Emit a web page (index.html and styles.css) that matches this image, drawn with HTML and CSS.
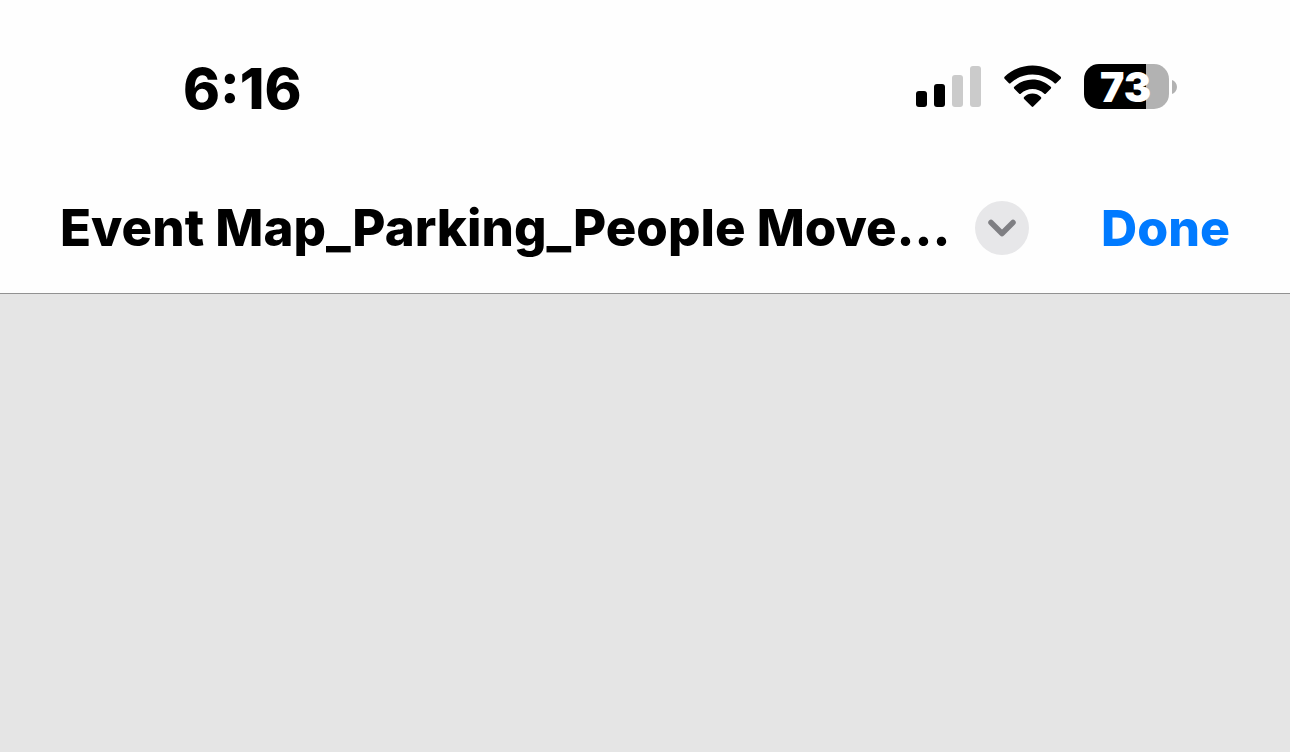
FILE: index.html
```html
<!DOCTYPE html>
<html lang="en">
<head>
<meta charset="utf-8">
<meta name="viewport" content="width=device-width, initial-scale=1">
<title>Event Map</title>
<link rel="stylesheet" href="styles.css">
</head>
<body>
<header class="top">
  <div class="status">
    <time class="clock">6:16</time>
    <div class="indicators">
      <svg class="signal" width="66" height="42" viewBox="0 0 66 42" role="img" aria-label="Signal: 2 of 4 bars">
        <rect x="0" y="25" width="11" height="16" rx="3"/>
        <rect x="18" y="18" width="11" height="23" rx="3"/>
        <rect class="off" x="36" y="9" width="11" height="32" rx="3"/>
        <rect class="off" x="54" y="0" width="11" height="41" rx="3"/>
      </svg>
      <svg class="wifi" width="58" height="42" viewBox="0 0 58 42" role="img" aria-label="Wi-Fi">
        <path d="M.6 10.700C8.300 3.500 18.300-.5 28.500-.5s20.500 4 28.200 11.200q.8 1 0 2L52.300 17.100q-1 1-2 0C44.500 11.500 36.800 8.500 28.500 8.500S12.500 11.500 6.700 17.100q-1 1-2 0L.6 12.700q-.8-1 0-2Z"/>
        <path d="M10.300 20.800C15.300 16.100 21.700 13.500 28.500 13.500s13.200 2.600 18.200 7.300q1 1 0 2L42 27.500q-1 1-2 0C36.800 24.500 33 22.900 28.500 22.900s-8.300 1.600-11.500 4.600q-1 1-2 0l-4.700-4.700q-1-1 0-2Z"/>
        <path d="M20.100 31C22.500 28.700 25.400 27.600 28.500 27.600s6 1.100 8.400 3.400q1 1 0 2L29.300 40.600q-.8.800-1.600 0l-7.600-7.600q-1-1 0-2Z"/>
      </svg>
      <div class="battery">
        <div class="cell">73</div>
        <svg width="5" height="14" viewBox="0 0 5 14" aria-hidden="true"><path d="M0 0c3 1 5 4 5 7s-2 6-5 7Z" fill="#b2b2b2"/></svg>
      </div>
    </div>
  </div>
  <nav class="bar">
    <h1 class="title">Event Map_Parking_People Move…</h1>
    <button class="more" type="button" aria-label="Document options">
      <svg width="28" height="18" viewBox="0 0 28 18" aria-hidden="true"><path d="M3 3.500 14 14.500 25 3.500" fill="none" stroke="#7f7f83" stroke-width="5.500" stroke-linecap="round" stroke-linejoin="round"/></svg>
    </button>
    <button class="done" type="button">Done</button>
  </nav>
</header>
<main class="page"></main>
</body>
</html>
```
FILE: styles.css
```css
* { box-sizing: border-box; }

body {
  margin: 0;
  min-height: 100vh;
  display: flex;
  flex-direction: column;
  background: #e5e5e5;
  color: #000;
  font-family: Inter, "Liberation Sans", sans-serif;
}

.top {
  background: #fefefe;
  border-bottom: 1px solid #929292;
}

.status {
  display: flex;
  justify-content: space-between;
  align-items: flex-start;
  padding: 56px 113px 0 183px;
}

.clock {
  font-size: 56px;
  font-weight: 800;
  line-height: 66px;
}

.indicators {
  display: flex;
  align-items: center;
  gap: 22px;
  padding-top: 8px;
}

.wifi { overflow: visible; }

.signal .off { fill: #cbcbcb; }

.battery {
  display: flex;
  align-items: center;
  gap: 3px;
}

.cell {
  width: 85px;
  height: 45px;
  padding-right: 2px;
  border-radius: 15px;
  background: linear-gradient(to right, #000 73%, #b2b2b2 73%);
  color: #fff;
  font-size: 41px;
  font-weight: 900;
  line-height: 46px;
  text-align: center;
}

.bar {
  display: flex;
  align-items: center;
  padding: 75px 60px 34px;
}

.title {
  flex: 1;
  margin: 0;
  white-space: nowrap;
  font-size: 51px;
  font-weight: 800;
  line-height: 62px;
}

.more {
  display: flex;
  flex: none;
  align-items: center;
  justify-content: center;
  width: 54px;
  height: 54px;
  margin-right: 72px;
  padding: 0;
  border: 0;
  border-radius: 50%;
  background: #e7e7e9;
}

.done {
  flex: none;
  padding: 0;
  border: 0;
  background: none;
  color: #007aff;
  font: inherit;
  font-size: 50px;
  font-weight: 800;
  line-height: 62px;
}

.page {
  flex: 1;
  background: #e5e5e5;
}
```
